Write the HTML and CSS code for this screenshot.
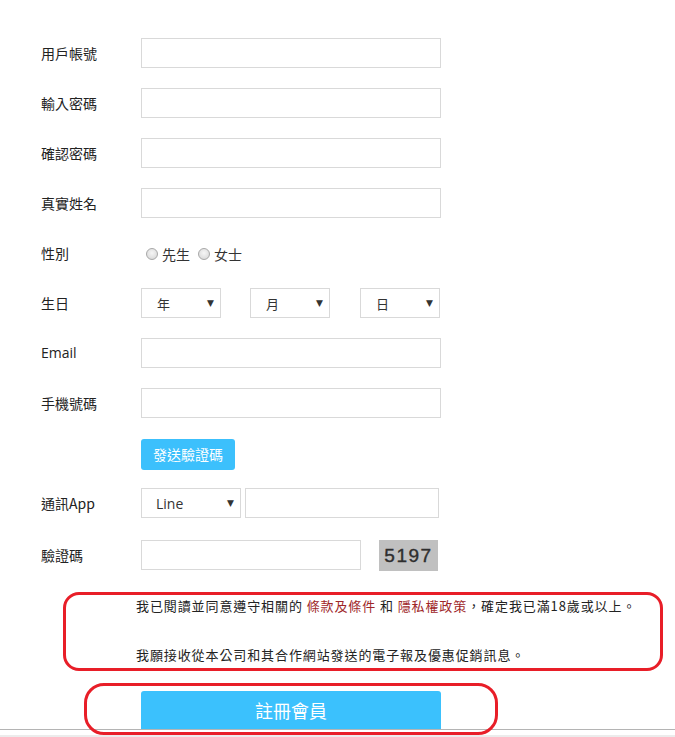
FILE: index.html
```html
<!DOCTYPE html>
<html lang="zh-Hant">
<head>
<meta charset="utf-8">
<title>註冊會員</title>
<link rel="stylesheet" href="styles.css">
</head>
<body>
<form class="form">
  <div class="row"><label class="lbl">用戶帳號</label><input class="txt" type="text"></div>
  <div class="row"><label class="lbl">輸入密碼</label><input class="txt" type="password"></div>
  <div class="row"><label class="lbl">確認密碼</label><input class="txt" type="password"></div>
  <div class="row"><label class="lbl">真實姓名</label><input class="txt" type="text"></div>
  <div class="row">
    <label class="lbl">性別</label>
    <div class="radios">
      <span class="radio"></span><span class="rtext">先生</span>
      <span class="radio"></span><span class="rtext">女士</span>
    </div>
  </div>
  <div class="row">
    <label class="lbl">生日</label>
    <div class="sel sel-y"><span>年</span><span class="arrow">▼</span></div>
    <div class="sel sel-m"><span>月</span><span class="arrow">▼</span></div>
    <div class="sel sel-d"><span>日</span><span class="arrow">▼</span></div>
  </div>
  <div class="row"><label class="lbl lbl-en">Email</label><input class="txt" type="text"></div>
  <div class="row"><label class="lbl">手機號碼</label><input class="txt" type="text"></div>
  <div class="row"><span class="lbl"></span><button type="button" class="send">發送驗證碼</button></div>
  <div class="row">
    <label class="lbl">通訊App</label>
    <div class="sel sel-app"><span class="en">Line</span><span class="arrow">▼</span></div>
    <input class="txt txt-app" type="text">
  </div>
  <div class="row row-cap">
    <label class="lbl">驗證碼</label>
    <input class="txt txt-cap" type="text">
    <div class="captcha">5197</div>
  </div>
  <div class="terms">
    <p class="line1">我已閱讀並同意遵守相關的 <a class="lnk">條款及條件</a> 和 <a class="lnk">隱私權政策</a>，確定我已滿18歲或以上。</p>
    <p class="line2">我願接收從本公司和其合作網站發送的電子報及優惠促銷訊息。</p>
  </div>
  <div class="submit-row"><button type="button" class="submit">註冊會員</button></div>
</form>
<div class="mark mark1"></div>
<div class="mark mark2"></div>
<div class="bottombar"></div>
</body>
</html>
```
FILE: styles.css
```css
html, body {
  margin: 0;
  padding: 0;
  background: #fff;
}
body {
  font-family: "Noto Sans CJK TC", "Noto Sans", sans-serif;
  color: #222;
  font-size: 14px;
  overflow: hidden;
  height: 737px;
}
.form {
  padding: 38px 0 0 41px;
}
.row {
  display: flex;
  align-items: center;
  height: 30px;
  margin-bottom: 20px;
}
.row-cap {
  margin-top: 22px;
}
.lbl {
  width: 100px;
  flex: none;
  font-size: 14px;
  line-height: 20px;
  color: #222;
}
.lbl-en {
  font-family: "Open Sans", "Noto Sans CJK TC", sans-serif;
  font-size: 14px;
}
.txt {
  box-sizing: border-box;
  width: 300px;
  height: 30px;
  border: 1px solid #d9d9d9;
  margin: 0;
  padding: 0 8px;
  outline: none;
  background: #fff;
}
.radios {
  display: flex;
  align-items: center;
  padding-left: 5px;
  padding-top: 2px;
}
.radio {
  width: 12px;
  height: 12px;
  box-sizing: border-box;
  border-radius: 50%;
  border: 1px solid #a8a8a8;
  background: radial-gradient(circle at 50% 40%, #f6f6f6 0%, #dedede 70%, #cfcfcf 100%);
  margin-right: 4px;
}
.rtext {
  font-size: 14px;
  color: #333;
  margin-right: 8px;
}
.sel {
  box-sizing: border-box;
  height: 30px;
  width: 80px;
  border: 1px solid #d9d9d9;
  display: flex;
  align-items: center;
  justify-content: space-between;
  padding: 0 6px 0 15px;
  font-size: 13px;
  color: #333;
  background: #fff;
}
.sel-m { margin-left: 29px; }
.sel-d { margin-left: 30px; }
.arrow {
  font-size: 9px;
  color: #333;
  font-family: "DejaVu Sans", sans-serif;
}
.sel-app {
  width: 100px;
  padding-left: 14px;
}
.en {
  font-family: "Open Sans", sans-serif;
  font-size: 14px;
  color: #333;
}
.txt-app {
  width: 194px;
  margin-left: 4px;
}
.txt-cap {
  width: 220px;
}
.captcha {
  margin-left: 18px;
  width: 59px;
  height: 31px;
  margin-top: 1px;
  background: #c0c0c0;
  color: #2e2e2e;
  font-family: "Liberation Sans", Arial, sans-serif;
  font-weight: normal;
  font-size: 19px;
  letter-spacing: 1.5px;
  display: flex;
  align-items: center;
  justify-content: center;
  -webkit-text-stroke: 0.4px #2e2e2e;
}
.send {
  width: 94px;
  height: 31px;
  margin-top: 2px;
  border: none;
  border-radius: 3px;
  background: #3cc0fc;
  color: #fff;
  font-family: "Noto Sans CJK TC", sans-serif;
  font-size: 14px;
  padding: 0;
}
.terms {
  margin-left: 95px;
  margin-top: 26px;
  font-size: 13px;
  letter-spacing: 0.9px;
  color: #222;
}
.terms p {
  margin: 0;
  line-height: 20px;
}
.line2 {
  margin-top: 29px !important;
}
.lnk {
  color: #9e2628;
}
.submit-row {
  margin-top: 26px;
  padding-left: 100px;
}
.submit {
  width: 300px;
  height: 42px;
  border: none;
  border-radius: 3px 3px 0 0;
  background: #3bc1fd;
  color: #fff;
  font-family: "Noto Sans CJK TC", sans-serif;
  font-size: 18px;
  padding: 0 0 4px;
}
.mark {
  position: absolute;
  border: 3px solid #e81e28;
  box-sizing: border-box;
}
.mark1 {
  left: 63px;
  top: 592px;
  width: 600px;
  height: 79px;
  border-radius: 16px;
}
.mark2 {
  left: 84px;
  top: 683px;
  width: 414px;
  height: 52px;
  border-radius: 20px;
  z-index: 2;
}
.bottombar {
  position: fixed;
  left: 0;
  right: 0;
  bottom: 0;
  height: 8px;
  border-top: 1px solid #b4b4b4;
  border-bottom: 2px solid #ececec;
  background: #fff;
  box-sizing: border-box;
  z-index: 1;
}
```
